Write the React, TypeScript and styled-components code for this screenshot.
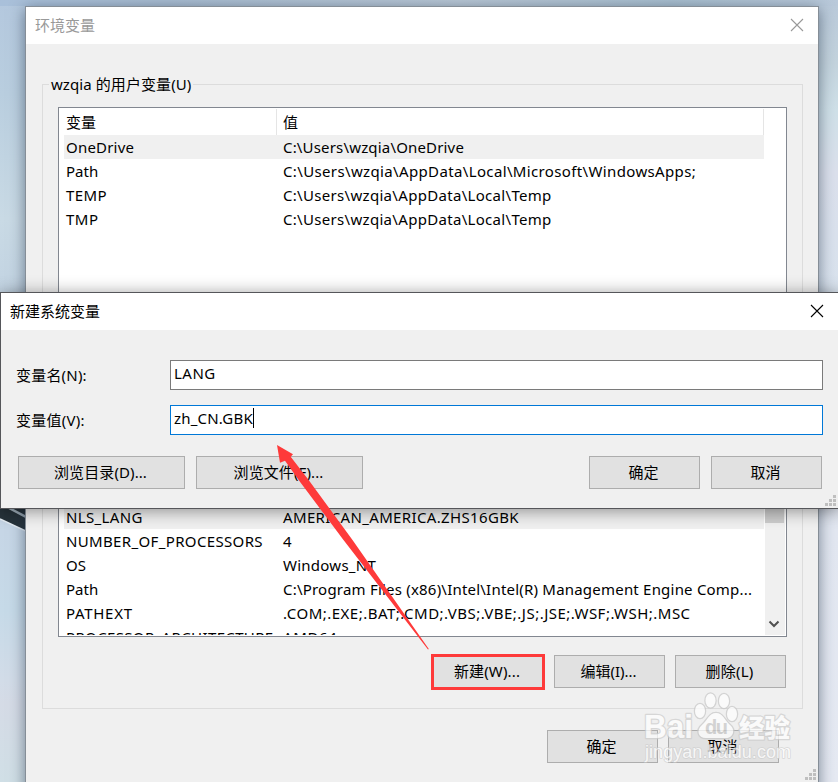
import React from "react";
import styled, { createGlobalStyle } from "styled-components";

const Global = createGlobalStyle`
  * { box-sizing: border-box; }
  html, body { margin: 0; padding: 0; overflow: hidden; }
  body {
    font-family: "Noto Sans", "Noto Sans CJK SC", sans-serif;
    font-size: 15px;
    line-height: 24px;
    color: #000;
  }
`;

const Desktop = styled.div`
  position: relative;
  width: 838px;
  height: 782px;
  overflow: hidden;
  background:
    linear-gradient(90deg, #a9c0da 0, #a9bdd2 20%, #b9c8d6 55%, #a9bfd0 80%, #b9c9da 100%) 0 0 / 100% 6px no-repeat,
    linear-gradient(180deg, #b4c8de 0, #b9cedf 12%, #c9dae5 28%, #c2d3e2 38%, #c6d6e6 68%, #c6dae8 78%, #d2dce8 87%, #d5dbe6 90%, #d0dfe6 100%) 0 0 / 26px 100% no-repeat,
    linear-gradient(180deg, #b9c9da 0, #c3d3dd 8%, #cfe0e8 14%, #dbe0ec 22%, #d9e3ee 38%, #e2e7f1 68%, #e6eaf3 100%);
`;

const Wallpaper = styled.svg`
  position: absolute;
  left: 0;
  top: 500px;
`;

const MainWindow = styled.section`
  position: absolute;
  left: 25px;
  top: 6px;
  width: 794px;
  height: 800px;
  border: 1px solid #858e97;
  background: #f0f0f0;
  box-shadow: 0 3px 14px rgba(30, 45, 65, 0.55);
`;

const Dialog = styled.section`
  position: absolute;
  left: 0;
  top: 292px;
  width: 840px;
  height: 217px;
  border: 1px solid #55565a;
  background: #f0f0f0;
  box-shadow: 0 2px 16px rgba(0, 0, 0, 0.42);
`;

const TitleBar = styled.header<{ $inactive?: boolean }>`
  display: flex;
  align-items: center;
  justify-content: space-between;
  height: 37px;
  padding: 0 ${(p) => (p.$inactive ? 14 : 15)}px 2px 9px;
  background: #fff;
  color: ${(p) => (p.$inactive ? "#999" : "#000")};
`;

const Groups = styled.div`
  display: flex;
  flex-direction: column;
  gap: 16px;
  padding: 40px 15px 0 16px;
`;

const Group = styled.div<{ $h: number }>`
  display: flex;
  flex-direction: column;
  height: ${(p) => p.$h}px;
  padding: 0 15px;
  border: 1px solid #dcdcdc;
`;

const Legend = styled.div`
  align-self: flex-start;
  height: 24px;
  margin: -13px 0 11px -9px;
  padding: 0 2px;
  background: #f0f0f0;
`;

const ListView = styled.div<{ $h: number }>`
  display: flex;
  justify-content: space-between;
  flex: none;
  height: ${(p) => p.$h}px;
  padding: 1px 1px 1px 5px;
  border: 1px solid #828790;
  background: #fff;
  overflow: hidden;
`;

const Rows = styled.div`
  display: flex;
  flex-direction: column;
  width: 700px;
  overflow: hidden;
`;

const HeaderRow = styled.div`
  display: grid;
  grid-template-columns: 213px 1fr;
  flex: none;
  height: 26px;
  line-height: 27px;
`;

const HeaderCell = styled.div<{ $value?: boolean }>`
  padding-left: ${(p) => (p.$value ? 6 : 2)}px;
  border-right: 1px solid #e5e5e5;
`;

const Row = styled.div<{ $selected?: boolean }>`
  display: grid;
  grid-template-columns: 217px 1fr;
  flex: none;
  height: 24px;
  padding-left: 2px;
  background: ${(p) => (p.$selected ? "#f0f0f0" : "transparent")};
  white-space: nowrap;
`;

const ScrolledOut = styled.div`
  flex: none;
  height: 92px;
`;

const Text = styled.span<{ $ls?: number }>`
  white-space: pre;
  letter-spacing: ${(p) => p.$ls ?? 0}px;
`;

const ScrollBar = styled.div`
  display: flex;
  flex-direction: column;
  justify-content: space-between;
  width: 20px;
  background: #f0f0f0;
`;

const Thumb = styled.div`
  width: 19px;
  height: 136px;
  background: #cdcdcd;
`;

const Chevron = styled.svg`
  margin-left: 3px;
`;

const ButtonRow = styled.div<{ $top: number; $right: number }>`
  display: flex;
  justify-content: flex-end;
  gap: 10px;
  margin-top: ${(p) => p.$top}px;
  padding-right: ${(p) => p.$right}px;
`;

const Button = styled.button<{ $w?: number }>`
  flex: none;
  width: ${(p) => p.$w ?? 111}px;
  height: 33px;
  padding: 0 2px 1px 0;
  border: 1px solid #adadad;
  background: #e1e1e1;
  font: inherit;
  line-height: 30px;
  color: #000;
`;

const MarkedButton = styled(Button)`
  position: relative;
  padding-right: 3px;
  &::after {
    content: "";
    position: absolute;
    inset: -2px -2px -3px -3px;
    border: 3px solid #fe3a3a;
  }
`;

const Form = styled.div`
  display: grid;
  grid-template-columns: 154px 653px;
  row-gap: 15px;
  padding: 30px 0 0 15px;
`;

const Label = styled.label`
  line-height: 30px;
`;

const Field = styled.div<{ $focused?: boolean }>`
  display: flex;
  align-items: flex-start;
  height: 30px;
  padding: 0 3px;
  border: 1px solid ${(p) => (p.$focused ? "#0078d7" : "#7a7a7a")};
  background: #fff;
`;

const Caret = styled.i`
  width: 1px;
  height: 20px;
  margin-top: 2px;
  background: #000;
`;

const DialogButtons = styled.div`
  display: flex;
  gap: 11px;
  margin-top: 21px;
  padding: 0 17px;
`;

const Spacer = styled.div`
  flex: 1;
`;

const Grip = styled.svg`
  position: absolute;
  right: 3px;
  bottom: 2px;
`;

const MainGrip = styled(Grip)`
  bottom: 25px;
  right: 2px;
`;

const Arrow = styled.svg`
  position: absolute;
  left: 0;
  top: 0;
`;

const Watermark = styled.svg`
  position: absolute;
  left: 630px;
  top: 680px;
  opacity: 0.72;
`;

const Close = () => (
  <svg width="14" height="14" viewBox="0 0 14 14" fill="none" stroke="currentColor" strokeWidth="1.1">
    <path d="M1 1 13 13M13 1 1 13" />
  </svg>
);

const GripDots = () => (
  <g fill="#bfbfbf">
    {[[8, 0], [4, 4], [8, 4], [0, 8], [4, 8], [8, 8]].map(([x, y]) => (
      <rect key={`${x}-${y}`} x={x} y={y} width="3" height="3" />
    ))}
  </g>
);

type Entry = { name: string; value: string; ls?: number; vls?: number };

const userVars: Entry[] = [
  { name: "OneDrive", value: "C:\\Users\\wzqia\\OneDrive", ls: 0.2, vls: 0.17 },
  { name: "Path", value: "C:\\Users\\wzqia\\AppData\\Local\\Microsoft\\WindowsApps;", vls: 0.36 },
  { name: "TEMP", value: "C:\\Users\\wzqia\\AppData\\Local\\Temp", ls: 0.4, vls: 0.31 },
  { name: "TMP", value: "C:\\Users\\wzqia\\AppData\\Local\\Temp", ls: 0.5, vls: 0.31 },
];

const systemVars: Entry[] = [
  { name: "NLS_LANG", value: "AMERICAN_AMERICA.ZHS16GBK", ls: 0.35, vls: 0.35 },
  { name: "NUMBER_OF_PROCESSORS", value: "4", ls: 0.35 },
  { name: "OS", value: "Windows_NT", vls: 0.25 },
  { name: "Path", value: "C:\\Program Files (x86)\\Intel\\Intel(R) Management Engine Comp...", vls: 0.21 },
  { name: "PATHEXT", value: ".COM;.EXE;.BAT;.CMD;.VBS;.VBE;.JS;.JSE;.WSF;.WSH;.MSC", ls: 0.7, vls: 0.49 },
  { name: "PROCESSOR_ARCHITECTURE", value: "AMD64", ls: 0.35, vls: 0.6 },
];

const VarRows = ({ items }: { items: Entry[] }) => (
  <>
    {items.map((v, i) => (
      <Row key={v.name} $selected={i === 0}>
        <Text $ls={v.ls}>{v.name}</Text>
        <Text $ls={v.vls}>{v.value}</Text>
      </Row>
    ))}
  </>
);

const Header = () => (
  <HeaderRow>
    <HeaderCell>变量</HeaderCell>
    <HeaderCell $value>值</HeaderCell>
  </HeaderRow>
);

const WatermarkShapes = () => (
  <>
    <ellipse cx="80.500" cy="20.500" rx="5" ry="7" />
    <ellipse cx="94" cy="21" rx="5" ry="7" />
    <ellipse cx="70" cy="31" rx="5" ry="7" />
    <ellipse cx="102" cy="34" rx="5" ry="7" />
    <path d="M86 33C93 33 95 41 100 45 106 50 103 58 96 58H76C68 58 66 50 72 45 77 41 79 33 86 33Z" />
  </>
);

export default function App() {
  return (
    <Desktop>
      <Global />
      <Wallpaper width="26" height="40">
        <path d="M0 0H26V31L0 19Z" fill="#27333b" />
        <path d="M9 8 26 17" stroke="#a9b8c4" strokeWidth="2.5" />
        <path d="M0 19 26 31" stroke="#e6eef5" strokeWidth="1.5" />
      </Wallpaper>

      <MainWindow>
        <TitleBar $inactive>
          <Text>环境变量</Text>
          <Close />
        </TitleBar>
        <Groups>
          <Group $h={284}>
            <Legend>
              <Text $ls={0.08}>wzqia 的用户变量(U)</Text>
            </Legend>
            <ListView $h={204}>
              <Rows>
                <Header />
                <VarRows items={userVars} />
              </Rows>
            </ListView>
          </Group>
          <Group $h={325}>
            <ListView $h={252}>
              <Rows>
                <Header />
                <ScrolledOut />
                <VarRows items={systemVars} />
              </Rows>
              <ScrollBar>
                <Thumb />
                <Chevron width="12" height="20" viewBox="0 0 12 20" fill="none" stroke="#505050" strokeWidth="2">
                  <path d="M1.500 6.500 6 11 10.500 6.500" />
                </Chevron>
              </ScrollBar>
            </ListView>
            <ButtonRow $top={18} $right={1}>
              <MarkedButton>
                <Text $ls={0.15}>新建(W)...</Text>
              </MarkedButton>
              <Button>编辑(I)...</Button>
              <Button>
                <Text $ls={0.2}>删除(L)</Text>
              </Button>
            </ButtonRow>
          </Group>
        </Groups>
        <ButtonRow $top={21} $right={39}>
          <Button>确定</Button>
          <Button>取消</Button>
        </ButtonRow>
        <MainGrip width="11" height="11">
          <GripDots />
        </MainGrip>
      </MainWindow>

      <Dialog>
        <TitleBar>
          <Text>新建系统变量</Text>
          <Close />
        </TitleBar>
        <Form>
          <Label>
            <Text $ls={0.2}>变量名(N):</Text>
          </Label>
          <Field>
            <Text $ls={0.5}>LANG</Text>
          </Field>
          <Label>
            <Text $ls={0.25}>变量值(V):</Text>
          </Label>
          <Field $focused>
            <Text $ls={0.2}>zh_CN.GBK</Text>
            <Caret />
          </Field>
        </Form>
        <DialogButtons>
          <Button $w={167}>
            <Text $ls={0.1}>浏览目录(D)...</Text>
          </Button>
          <Button $w={167}>
            <Text $ls={0.1}>浏览文件(F)...</Text>
          </Button>
          <Spacer />
          <Button>确定</Button>
          <Button>取消</Button>
        </DialogButtons>
        <Grip width="11" height="11">
          <GripDots />
        </Grip>
      </Dialog>

      <Arrow width="838" height="782">
        <path d="M277 445 293 454.300 290.700 456.700 309 480.500 352.500 540 428.800 649 428 649.500 343.500 540 299 480.500 285 460.700 280 462.800Z" fill="#fe3a3a" />
      </Arrow>

      <Watermark width="180" height="102">
        <g fill="#c8c8c8" stroke="#c8c8c8" strokeWidth="2.5">
          <WatermarkShapes />
        </g>
        <g fill="#fff">
          <WatermarkShapes />
        </g>
        <g fill="#fff" stroke="#cdcdcd" paintOrder="stroke" strokeWidth="2.500" strokeLinejoin="round">
          <text x="14" y="58" fontSize="33" fontWeight="700" fontFamily="Liberation Sans, sans-serif" textLength="49" lengthAdjust="spacingAndGlyphs">Bai</text>
          <text x="109" y="56.500" fontSize="25.500" fontWeight="900" fontFamily="Noto Sans CJK SC, sans-serif">经验</text>
          <text x="15" y="78" fontSize="18" fontFamily="Liberation Sans, sans-serif" textLength="146" strokeWidth="1.500">jingyan.baidu.com</text>
        </g>
        <text x="75" y="54" fontSize="20" fontWeight="700" fontFamily="Liberation Sans, sans-serif" fill="#c8c8c8" textLength="23">du</text>
      </Watermark>
    </Desktop>
  );
}
